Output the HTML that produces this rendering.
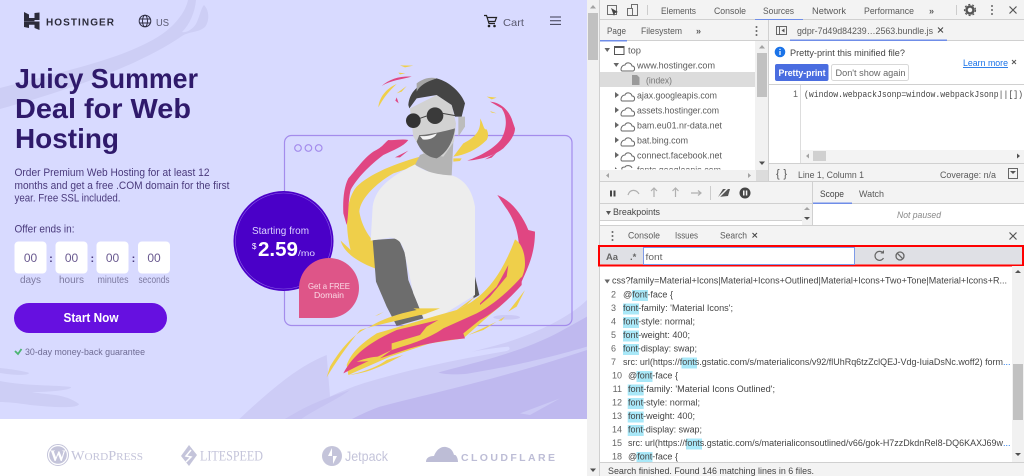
<!DOCTYPE html>
<html lang="en"><head><meta charset="utf-8"><title>Hostinger DevTools</title>
<style>
html,body{margin:0;padding:0;width:1024px;height:476px;overflow:hidden;background:#fff}
svg{display:block;font-family:"Liberation Sans",sans-serif}
#root{filter:blur(.3px)}
.d{font-size:9px;fill:#5a5a5a}
.c{font-size:9px;fill:#444}
.n{font-size:9px;fill:#666}
.p{font-size:11px;fill:#4a3a7c}
.l{font-size:10px;fill:#7d7aa0}
.o{font-size:12px;fill:#6a5a90}
.lg{fill:#c4c4da}
.hl{fill:#a9e8f8}
</style></head><body>
<svg id="root" xmlns="http://www.w3.org/2000/svg" width="1024" height="476" viewBox="0 0 1024 476">
<defs><clipPath id="pg"><rect width="587" height="419"/></clipPath></defs>
<rect width="1024" height="476" fill="#fff"/>
<rect width="587" height="419" fill="#d8daff"/>
<g clip-path="url(#pg)">
<path d="M0 88C60 72 130 58 165 32 178 22 186 10 188 0H196C195 12 190 24 182 32 186 33 192 30 196 24 200 16 201 8 204 5 209 10 210 20 205 27 198 33 190 31 182 36 140 65 70 90 0 109Z" fill="#cdcef5"/>
<path d="M0 368C12 369 28 372 29 373 28 376 12 375 0 373ZM0 381C25 386 55 385 71 387 72 390 50 392 32 392 45 395 65 393 79 404 78 409 50 407 30 405 18 403 6 402 0 402Z" fill="#cdcef5"/>
<g transform="translate(220 50) scale(.33333)">
<g transform="translate(330 750)">
<path d="M-275 360C-190 280 -100 200 -10 165L0 290C100 240 300 190 520 130 620 100 720 50 771 0V360Z" fill="#cdccf6"/>
<path d="M100 250C250 190 420 150 535 140 545 148 535 153 520 155 400 175 250 205 100 250Z" fill="#d8daff"/>
<path d="M325 218C400 195 560 165 690 95L771 50V140C600 190 500 205 430 218 400 225 350 225 325 218Z" fill="#bfb9ef"/>
<path d="M150 320C300 280 500 240 771 150V360H60C90 345 120 330 150 320Z" fill="#bfb9ef"/>
<path d="M-140 360C-60 310 0 290 60 270 20 300 -50 330 -90 360Z" fill="#c6c3f2"/>
<path d="M570 340L690 295 600 345Z" fill="#cbc9f5"/>
</g>
<ellipse cx="860" cy="802" rx="40" ry="7" fill="#cbc9f5"/>
</g>
<rect x="284.500" y="135.500" width="287.500" height="190" rx="7" fill="none" stroke="#a48cec" stroke-width="1.200"/>
<g fill="none" stroke="#a48cec" stroke-width="1.200"><circle cx="298" cy="148" r="3.300"/><circle cx="308.400" cy="148" r="3.300"/><circle cx="318.700" cy="148" r="3.300"/></g>
<g transform="translate(220 50) scale(.33333)">
<!-- top-right yellow tail -->
<path d="M780 205C792 225 790 240 800 238 806 250 805 262 800 270 770 300 735 315 700 320L730 280C760 265 785 245 780 205Z" fill="#efcf4a"/>
<path d="M700 325L725 325 720 333 700 335Z" fill="#efcf4a"/>
<!-- yellow C -->
<path d="M600 320C530 340 450 370 410 410 385 440 378 490 382 540 384 565 388 585 392 600L362 572C370 605 410 635 465 655L480 590C450 570 425 530 418 485 420 450 460 405 520 370L610 340Z" fill="#efcf4a"/>
<!-- pink C -->
<path d="M565 270C545 266 525 272 505 270 490 282 490 290 460 305 430 325 400 370 385 385 372 410 368 450 370 490L380 525C386 500 384 450 392 420 410 385 450 345 490 315 520 300 550 290 565 270Z" fill="#e04682"/>
<path d="M525 322L565 302 540 322Z" fill="#e04682"/>
<!-- top-right pink -->
<path d="M810 155C845 158 870 185 878 215L885 235C885 255 870 275 850 295 825 315 790 328 742 332 780 318 825 295 845 265 858 240 865 205 845 175Z" fill="#e04682"/>
<path d="M795 328L830 308 815 323Z" fill="#e04682"/>
<path d="M800 140L830 143 815 148ZM810 183L830 190 815 188Z" fill="#efcf4a"/>
<path d="M485 108C510 85 545 78 575 80 545 88 510 92 485 108ZM530 142L536 160 526 152Z" fill="#e04682"/>
<path d="M475 172C478 140 500 115 530 102 505 125 490 145 475 172ZM530 130L560 108 545 125ZM540 46L580 47 555 52ZM535 68L556 70 540 73Z" fill="#efcf4a"/>
<!-- person -->
<path d="M600 315L700 275 695 378 640 372 585 345Z" fill="#b4b4b4"/>
<path d="M458 570L535 565 555 610 565 690 610 805 530 828 500 770 468 695Z" fill="#6d6d6d"/>
<path d="M765 680L778 735 760 745Z" fill="#555"/>
<path d="M585 343C600 360 650 375 695 376 725 385 755 410 765 470L765 735 650 806 612 805 580 730 555 615C550 580 535 565 510 563L452 572 458 470C465 420 500 385 585 343Z" fill="#ededed"/>
<path d="M715 200L735 200 735 230 715 260Z" fill="#bcbcbc"/>
<path d="M570 175L650 135 695 165 708 220 702 275 670 320 610 310 580 260 575 220Z" fill="#d2d2d2"/>
<path d="M598 255C620 255 670 245 705 235 700 275 680 310 650 325 620 322 600 300 590 275Z" fill="#6e6e6e"/>
<path d="M600 258C615 260 635 256 650 250 648 262 625 272 608 268Z" fill="#f4f4f4"/>
<path d="M565 165C568 130 590 100 650 85 690 95 725 130 735 160L725 200 705 200 695 165 650 135 590 145 568 175Z" fill="#444"/>
<path d="M590 100C610 85 630 80 650 85 620 95 600 105 590 125Z" fill="#a5a5a5"/>
<circle cx="580" cy="212" r="22" fill="#333"/><circle cx="645" cy="197" r="25" fill="#3a3a3a"/>
<path d="M600 205L620 198M668 190L712 198" stroke="#444" stroke-width="3"/>
<!-- right pink -->
<path d="M832 435C870 450 905 490 925 540L945 545C945 610 925 650 905 695L895 650C905 560 885 510 855 470Z" fill="#e04682"/>
<!-- yellow wisp -->
<path d="M330 950C360 900 400 850 450 830 490 805 540 790 590 780L580 775 660 775C620 790 610 795 600 795 540 810 470 825 420 840 380 890 345 940 320 982Z" fill="#efcf4a"/>
<!-- big yellow -->
<path d="M380 945C395 905 425 880 470 850 540 830 620 805 710 780 765 755 830 715 885 568 905 580 915 610 915 640 915 680 890 715 840 770 790 810 760 840 730 865L630 880 510 920 385 975Z" fill="#efcf4a"/>
<path d="M710 780L765 740 740 765Z" fill="#efcf4a"/>
<!-- pink lower -->
<path d="M515 900C560 885 620 870 670 835L770 790C820 765 870 720 905 680V705C870 745 820 790 780 810L730 850 735 865C680 870 620 880 570 895L480 925Z" fill="#e04682"/>
<path d="M370 970C395 925 430 885 530 840L655 810 620 830 600 855 515 880 515 900 410 950Z" fill="#e04682"/>
<path d="M780 760L830 710 865 645 860 680 810 740 780 765Z" fill="#e04682"/>
<path d="M410 935C450 920 470 920 485 920 460 935 430 935 410 935ZM385 975C440 965 480 945 500 930L550 915C500 940 450 970 385 975Z" fill="#efcf4a"/>
<path d="M745 855L830 815 790 840ZM865 785L915 720 890 770ZM835 812L855 800 845 812ZM465 798L492 785 475 795Z" fill="#efcf4a"/>
</g>
<circle cx="283.500" cy="241" r="50" fill="#4a00c8"/>
<circle cx="283.500" cy="241" r="48" fill="none" stroke="#8a5ce6" stroke-width=".6"/>
<path d="M299 318V288A30 30 0 1 1 329 318Z" fill="#de5588"/>
<text x="252" y="234" font-size="10" fill="#dcd4ff" textLength="57" lengthAdjust="spacingAndGlyphs">Starting from</text>
<text x="252" y="249" font-size="8" fill="#fff">$</text>
<text x="258" y="256" font-size="20" font-weight="bold" fill="#fff" textLength="40" lengthAdjust="spacingAndGlyphs">2.59</text>
<text x="298" y="256" font-size="8.500" fill="#dcd4ff" textLength="17" lengthAdjust="spacingAndGlyphs">/mo</text>
<text x="329" y="289" font-size="8.500" fill="#fbdbe7" text-anchor="middle" textLength="42" lengthAdjust="spacingAndGlyphs">Get a FREE</text>
<text x="329" y="298" font-size="8.500" fill="#fbdbe7" text-anchor="middle" textLength="30" lengthAdjust="spacingAndGlyphs">Domain</text>
</g>
<!-- header -->
<path d="M24 12L29 14.500V18H34.500V21.200H24ZM34.500 13L39.500 12.500V20H34.500ZM24 22H29V28L24 27ZM24 21.500H39.500V30L34.500 28V24.800H24Z" fill="#2b2b3a"/>
<text x="46" y="25.500" font-size="10" font-weight="bold" fill="#2b2b3a" textLength="68" lengthAdjust="spacing">HOSTINGER</text>
<g fill="none" stroke="#2f2f45" stroke-width="1"><circle cx="145" cy="21" r="5.800"/><ellipse cx="145" cy="21" rx="2.500" ry="5.800"/><path d="M139.500 19H150.500M139.500 23H150.500"/></g>
<text x="156" y="26" font-size="10.500" fill="#5a5a70" textLength="13" lengthAdjust="spacingAndGlyphs">US</text>
<g fill="none" stroke="#222" stroke-width="1.200"><path d="M484 15.500H486.500L489 23.500H495M487 17.500H496.500L495 21.500H488"/></g><circle cx="489" cy="26" r="1.300" fill="#222"/><circle cx="494.500" cy="26" r="1.300" fill="#222"/>
<text x="503" y="26" font-size="10.500" fill="#5a5a70" textLength="21" lengthAdjust="spacingAndGlyphs">Cart</text>
<path d="M550 17H561M550 20.700H561M550 24.400H561" stroke="#3a3a50" stroke-width="1"/>
<!-- hero text -->
<g font-size="27.500" font-weight="bold" fill="#2f1a6b">
<text x="15" y="88" textLength="183" lengthAdjust="spacingAndGlyphs">Juicy Summer</text>
<text x="15" y="118" textLength="176" lengthAdjust="spacingAndGlyphs">Deal for Web</text>
<text x="15" y="148" textLength="104" lengthAdjust="spacingAndGlyphs">Hosting</text>
</g>
<text class="p" x="14.500" y="176" textLength="195" lengthAdjust="spacingAndGlyphs">Order Premium Web Hosting for at least 12</text>
<text class="p" x="14.500" y="189" textLength="215" lengthAdjust="spacingAndGlyphs">months and get a free .COM domain for the first</text>
<text class="p" x="14.500" y="201.500" textLength="106" lengthAdjust="spacingAndGlyphs">year. Free SSL included.</text>
<text class="p" x="14.500" y="232.500" textLength="60" lengthAdjust="spacingAndGlyphs">Offer ends in:</text>
<g fill="#fff"><rect x="14.500" y="241.500" width="32" height="32" rx="4"/><rect x="55.500" y="241.500" width="32" height="32" rx="4"/><rect x="96.500" y="241.500" width="32" height="32" rx="4"/><rect x="138" y="241.500" width="32" height="32" rx="4"/></g>
<g text-anchor="middle">
<text class="o" x="30.500" y="262">00</text><text class="o" x="71.500" y="262">00</text><text class="o" x="112.500" y="262">00</text><text class="o" x="154" y="262">00</text>
<text x="51" y="262" font-size="11" font-weight="bold" fill="#4a3a7c">:</text><text x="92.300" y="262" font-size="11" font-weight="bold" fill="#4a3a7c">:</text><text x="133.500" y="262" font-size="11" font-weight="bold" fill="#4a3a7c">:</text>
<text class="l" x="30.500" y="283">days</text><text class="l" x="71.500" y="283">hours</text><text class="l" x="113" y="283" textLength="31" lengthAdjust="spacingAndGlyphs">minutes</text><text class="l" x="154" y="283" textLength="31" lengthAdjust="spacingAndGlyphs">seconds</text>
</g>
<rect x="14" y="303" width="153" height="30" rx="15" fill="#6610e0"/>
<text x="63.500" y="322" font-size="12.500" font-weight="bold" fill="#fff" textLength="55" lengthAdjust="spacingAndGlyphs">Start Now</text>
<path d="M15 351L18 354 21.500 349" fill="none" stroke="#4cb572" stroke-width="1.800"/>
<text x="25" y="355" font-size="9.500" fill="#6f6c94" textLength="120" lengthAdjust="spacingAndGlyphs">30-day money-back guarantee</text>
<!-- logos -->
<circle cx="58" cy="455" r="10.500" fill="none" stroke="#c4c4da" stroke-width="1"/>
<circle cx="58" cy="455" r="8.800" fill="#c4c4da"/>
<text x="58" y="461" font-family="Liberation Serif" font-size="16" font-weight="bold" fill="#fff" text-anchor="middle">W</text>
<text class="lg" x="71" y="460" font-family="Liberation Serif" font-size="14" textLength="72" lengthAdjust="spacingAndGlyphs">W<tspan font-size="11">ORD</tspan>P<tspan font-size="11">RESS</tspan></text>
<path d="M189 445L197 455 189 466 181 456Z" class="lg"/><path d="M191 450L186 456 191 457 186 462" stroke="#fff" stroke-width="1.500" fill="none"/>
<text class="lg" x="200" y="460.500" font-family="Liberation Serif" font-size="15" textLength="63" lengthAdjust="spacingAndGlyphs">LITESPEED</text>
<circle cx="332" cy="456" r="10" class="lg"/><path d="M332 448V456H328ZM333 464V456H337Z" fill="#fff"/>
<text class="lg" x="345" y="461" font-size="14" textLength="43" lengthAdjust="spacingAndGlyphs">Jetpack</text>
<path d="M426 462C426 458 429 456 434 456 436 450 441 446 446 447 451 448 453 451 454 455 456 454 458 458 458 462Z" fill="#bdbdd6"/>
<text x="461" y="461" font-size="10.500" font-weight="bold" fill="#bdbdd6" textLength="94" lengthAdjust="spacing">CLOUDFLARE</text>
<!-- page scrollbar -->
<rect x="587" width="12" height="476" fill="#f1f1f1"/>
<rect x="588" y="13" width="10" height="47" fill="#c1c1c1"/>
<path d="M593 5L596 8.500H590Z" fill="#a3a3a3"/>
<path d="M593 472L596 468.500H590Z" fill="#505050"/>
<!-- devtools chrome -->
<rect x="599" width="425" height="20" fill="#f3f3f3"/>
<rect x="599" y="19" width="425" height="1" fill="#d0d0d0"/>
<rect x="599" width="1" height="476" fill="#d0d0d0"/>
<rect x="607.500" y="5.500" width="9" height="9" fill="none" stroke="#6e6e6e"/>
<path d="M611 8L618 12 615 13 614 16Z" fill="#444"/>
<rect x="631.500" y="4.500" width="6" height="11" fill="none" stroke="#6e6e6e"/><rect x="627.500" y="8.500" width="5" height="7" fill="#f3f3f3" stroke="#6e6e6e"/>
<rect x="647" y="5" width="1" height="10" fill="#ccc"/>
<text class="d" x="661" y="14" textLength="35" lengthAdjust="spacingAndGlyphs">Elements</text>
<text class="d" x="714" y="14" textLength="32" lengthAdjust="spacingAndGlyphs">Console</text>
<text class="d" x="763" y="14" textLength="31" lengthAdjust="spacingAndGlyphs">Sources</text>
<text class="d" x="812" y="14" textLength="34" lengthAdjust="spacingAndGlyphs">Network</text>
<text class="d" x="864" y="14" textLength="50" lengthAdjust="spacingAndGlyphs">Performance</text>
<text class="d" x="929" y="14" font-weight="bold">»</text>
<rect x="755" y="19" width="48" height="1.500" fill="#6f8de8"/>
<rect x="956" y="5" width="1" height="10" fill="#ccc"/>
<circle cx="970" cy="10" r="3.500" fill="none" stroke="#555" stroke-width="2.500"/>
<circle cx="970" cy="10" r="5.500" fill="none" stroke="#555" stroke-width="1.200" stroke-dasharray="2 2"/>
<g fill="#666"><circle cx="992" cy="6" r="1"/><circle cx="992" cy="10" r="1"/><circle cx="992" cy="14" r="1"/></g>
<path d="M1009.500 6.500L1016.500 13.500M1016.500 6.500L1009.500 13.500" stroke="#555" stroke-width="1.200"/>
<!-- left nav -->
<rect x="600" y="20" width="168" height="20" fill="#f3f3f3"/>
<rect x="600" y="40" width="168" height="1" fill="#d0d0d0"/>
<rect x="600" y="40" width="27" height="1.500" fill="#6f8de8"/>
<text class="d" x="607" y="34" textLength="19" lengthAdjust="spacingAndGlyphs">Page</text>
<text class="d" x="641" y="34" textLength="41" lengthAdjust="spacingAndGlyphs">Filesystem</text>
<text class="d" x="696" y="34" font-weight="bold">»</text>
<g fill="#666"><circle cx="756.500" cy="27" r="1"/><circle cx="756.500" cy="31" r="1"/><circle cx="756.500" cy="35" r="1"/></g>
<rect x="600" y="72" width="155" height="15" fill="#dcdcdc"/>
<rect x="755" y="41" width="13" height="129" fill="#f1f1f1"/>
<rect x="757" y="53" width="10" height="44" fill="#c1c1c1"/>
<path d="M762 45L765 48.500H759Z" fill="#a3a3a3"/><path d="M762 165L765 161.500H759Z" fill="#505050"/>
<rect x="600" y="170" width="168" height="11" fill="#f1f1f1"/><rect x="756" y="170" width="12" height="11" fill="#dcdcdc"/>
<path d="M606 175.500L609 173V178Z" fill="#a3a3a3"/><path d="M751 175.500L748 173V178Z" fill="#a3a3a3"/>
<g fill="#666">
<path d="M604.500 48L610 48 607.250 52Z"/><path d="M613.500 63L619 63 616.250 67Z"/>
<path d="M615 92V98L619 95Z"/><path d="M615 107V113L619 110Z"/><path d="M615 122V128L619 125Z"/><path d="M615 137V143L619 140Z"/><path d="M615 152V158L619 155Z"/><path d="M615 167V169L617 169Z"/>
</g>
<rect x="614.500" y="46.500" width="9.500" height="8" fill="none" stroke="#555"/><rect x="614.500" y="46.500" width="9.500" height="1.500" fill="#555"/>
<g fill="none" stroke="#666" stroke-width="1">
<path d="M622 71H633C635 71 635.500 66 632 66 631 62 626 62 625 65 621 65 620 71 622 71Z"/>
<path d="M622 101H633C635 101 635.500 96 632 96 631 92 626 92 625 95 621 95 620 101 622 101Z"/>
<path d="M622 116H633C635 116 635.500 111 632 111 631 107 626 107 625 110 621 110 620 116 622 116Z"/>
<path d="M622 131H633C635 131 635.500 126 632 126 631 122 626 122 625 125 621 125 620 131 622 131Z"/>
<path d="M622 146H633C635 146 635.500 141 632 141 631 137 626 137 625 140 621 140 620 146 622 146Z"/>
<path d="M622 161H633C635 161 635.500 156 632 156 631 152 626 152 625 155 621 155 620 161 622 161Z"/>
<path d="M622 169.500C621 167 624 167 625 167 626 165 631 165 632 168"/>
</g>
<path d="M632 75H637L639.500 77.500V85H632Z" fill="#9a9a9a"/>
<text class="d" x="628" y="53.500" textLength="13" lengthAdjust="spacingAndGlyphs">top</text>
<text class="d" x="637" y="68.500" textLength="78" lengthAdjust="spacingAndGlyphs">www.hostinger.com</text>
<text class="d" x="646" y="83.500" textLength="26" lengthAdjust="spacingAndGlyphs" style="fill:#777">(index)</text>
<text class="d" x="637" y="98.500" textLength="80" lengthAdjust="spacingAndGlyphs">ajax.googleapis.com</text>
<text class="d" x="637" y="113.500" textLength="82" lengthAdjust="spacingAndGlyphs">assets.hostinger.com</text>
<text class="d" x="637" y="128.500" textLength="85" lengthAdjust="spacingAndGlyphs">bam.eu01.nr-data.net</text>
<text class="d" x="637" y="143.500" textLength="51" lengthAdjust="spacingAndGlyphs">bat.bing.com</text>
<text class="d" x="637" y="158.500" textLength="85" lengthAdjust="spacingAndGlyphs">connect.facebook.net</text>
<svg x="600" y="160" width="155" height="9.500" viewBox="600 160 155 9.500"><text class="d" x="637" y="173" textLength="84" lengthAdjust="spacingAndGlyphs">fonts.googleapis.com</text></svg>
<!-- editor -->
<rect x="768" y="20" width="1" height="161" fill="#d0d0d0"/>
<rect x="769" y="20" width="255" height="20" fill="#f3f3f3"/>
<rect x="769" y="40" width="255" height="1" fill="#d0d0d0"/>
<rect x="790" y="39.500" width="157" height="1.500" fill="#6f8de8"/>
<rect x="776.500" y="26.500" width="10" height="8" fill="none" stroke="#666"/><path d="M779.500 26V35" stroke="#666"/><path d="M784.500 28.500V32.500L781.500 30.500Z" fill="#555"/>
<text class="d" x="797" y="34" textLength="136" lengthAdjust="spacingAndGlyphs">gdpr-7d49d84239…2563.bundle.js</text>
<path d="M938 27.500L943 32.500M943 27.500L938 32.500" stroke="#444"/>
<circle cx="780" cy="52" r="5.300" fill="#1a73e8"/><rect x="779.400" y="51" width="1.200" height="4" fill="#fff"/><rect x="779.400" y="48.800" width="1.200" height="1.200" fill="#fff"/>
<text class="c" x="790" y="56" textLength="115" lengthAdjust="spacingAndGlyphs">Pretty-print this minified file?</text>
<rect x="775" y="64" width="53.500" height="17" rx="2" fill="#4a6de0"/>
<text x="778.500" y="76" font-size="9" font-weight="bold" fill="#fff" textLength="47" lengthAdjust="spacingAndGlyphs">Pretty-print</text>
<rect x="831.500" y="64.500" width="77" height="16" rx="2" fill="#fff" stroke="#d8d8d8"/>
<text class="n" x="835.500" y="76" textLength="70" lengthAdjust="spacingAndGlyphs">Don't show again</text>
<text x="963" y="66" font-size="9" fill="#1a73e8" text-decoration="underline" textLength="45" lengthAdjust="spacingAndGlyphs">Learn more</text>
<path d="M1012 60L1016 64M1016 60L1012 64" stroke="#555"/>
<rect x="769" y="84" width="255" height="1" fill="#d0d0d0"/>
<rect x="800" y="85" width="1" height="78" fill="#ddd"/>
<text class="n" x="793" y="97">1</text>
<text x="804" y="97" font-family="Liberation Mono" font-size="8.900" fill="#444" textLength="219" lengthAdjust="spacingAndGlyphs">(window.webpackJsonp=window.webpackJsonp||[])</text>
<rect x="801" y="150" width="223" height="13" fill="#f3f3f3"/>
<rect x="813" y="151" width="13" height="10" fill="#d0d0d0"/>
<path d="M806 156L809 153.500V158.500Z" fill="#a3a3a3"/><path d="M1020 156L1017 153.500V158.500Z" fill="#505050"/>
<rect x="769" y="163" width="255" height="18" fill="#f3f3f3"/>
<rect x="769" y="163" width="255" height="1" fill="#d0d0d0"/>
<text x="776" y="177" font-size="11" fill="#555" textLength="11" lengthAdjust="spacing">{}</text>
<text class="d" x="798" y="178" textLength="66" lengthAdjust="spacingAndGlyphs">Line 1, Column 1</text>
<text class="d" x="940" y="178" textLength="56" lengthAdjust="spacingAndGlyphs">Coverage: n/a</text>
<rect x="1008.500" y="168.500" width="9" height="10" fill="none" stroke="#666"/><path d="M1010 171H1016L1013 174Z" fill="#555"/>
<!-- debugger -->
<rect x="600" y="181" width="424" height="44" fill="#f3f3f3"/>
<rect x="600" y="181" width="424" height="1" fill="#d0d0d0"/>
<rect x="610" y="190.500" width="2" height="6" fill="#444"/><rect x="613.500" y="190.500" width="2" height="6" fill="#444"/>
<g fill="none" stroke="#b0b0b0" stroke-width="1.200"><path d="M628 195C630 189 636 189 639 194"/><path d="M654 188V197M651 191L654 188 657 191"/><path d="M675.500 188V197M672.500 191L675.500 188 678.500 191"/><path d="M691 193H701M698 190.500L701 193 698 195.500"/></g>
<rect x="710" y="186" width="1" height="14" fill="#ccc"/>
<path d="M718 197L723 189H730L728 196Z" fill="#555"/><path d="M718 198L728 188" stroke="#f3f3f3" stroke-width="1.500"/>
<circle cx="745" cy="193" r="5.500" fill="#444"/><rect x="743" y="190.500" width="1.500" height="5" fill="#f3f3f3"/><rect x="745.800" y="190.500" width="1.500" height="5" fill="#f3f3f3"/>
<rect x="600" y="203" width="212" height="1" fill="#d0d0d0"/>
<path d="M606 211H611L608.500 215Z" fill="#555"/>
<text class="c" x="613" y="215" textLength="47" lengthAdjust="spacingAndGlyphs">Breakpoints</text>
<rect x="600" y="220" width="212" height="1" fill="#d0d0d0"/><rect x="600" y="221" width="202" height="4" fill="#fff"/>
<rect x="802" y="204" width="10" height="21" fill="#f1f1f1"/><path d="M807 207L810 210H804Z" fill="#a3a3a3"/><path d="M807 220L810 217H804Z" fill="#505050"/>
<rect x="812" y="181" width="1" height="44" fill="#d0d0d0"/>
<rect x="813" y="204" width="211" height="21" fill="#fff"/><rect x="813" y="203" width="211" height="1" fill="#d0d0d0"/>
<rect x="813" y="202.500" width="39" height="1.500" fill="#6f8de8"/>
<text class="c" x="820" y="197" textLength="24" lengthAdjust="spacingAndGlyphs">Scope</text>
<text class="d" x="859" y="197" textLength="25" lengthAdjust="spacingAndGlyphs">Watch</text>
<text x="897" y="218" font-size="9" font-style="italic" fill="#888" textLength="44" lengthAdjust="spacingAndGlyphs">Not paused</text>
<!-- drawer -->
<rect x="600" y="225" width="424" height="21" fill="#f3f3f3"/>
<rect x="600" y="225" width="424" height="1" fill="#d0d0d0"/>
<g fill="#666"><circle cx="612.500" cy="232" r="1"/><circle cx="612.500" cy="236" r="1"/><circle cx="612.500" cy="240" r="1"/></g>
<text class="d" x="628" y="238.500" textLength="32" lengthAdjust="spacingAndGlyphs">Console</text>
<text class="d" x="675" y="238.500" textLength="23" lengthAdjust="spacingAndGlyphs">Issues</text>
<text class="d" x="720" y="238.500" textLength="27" lengthAdjust="spacingAndGlyphs">Search</text>
<path d="M752.500 233L757 237.500M757 233L752.500 237.500" stroke="#444"/>
<path d="M1009.500 232.500L1016.500 239.500M1016.500 232.500L1009.500 239.500" stroke="#555" stroke-width="1.200"/>
<rect x="599" y="246" width="424" height="19.500" fill="#dfe0e5" stroke="#f00" stroke-width="2"/>
<text x="606" y="260" font-size="9.500" font-weight="bold" fill="#666" textLength="12" lengthAdjust="spacingAndGlyphs">Aa</text>
<text x="630" y="260" font-size="9.500" font-weight="bold" fill="#666">.*</text>
<rect x="643.500" y="247.500" width="211" height="17" fill="#fff" stroke="#7e9be8"/>
<text class="n" x="645.500" y="260" textLength="17" lengthAdjust="spacingAndGlyphs">font</text>
<path d="M883 253A4.500 4.500 0 1 0 883.500 258" fill="none" stroke="#666" stroke-width="1.200"/><path d="M880.500 253.500H884V250Z" fill="#666"/>
<circle cx="900" cy="256" r="4" fill="none" stroke="#666" stroke-width="1.300"/><path d="M897.200 253.200L902.800 258.800" stroke="#666" stroke-width="1.300"/>
<!-- results -->
<rect x="1012" y="266" width="12" height="197" fill="#f1f1f1"/>
<rect x="1013" y="364" width="10" height="56" fill="#c1c1c1"/>
<path d="M1018 270L1021 273H1015Z" fill="#555"/><path d="M1018 456L1021 453H1015Z" fill="#505050"/>
<path d="M604.500 279.500H610L607.250 283.500Z" fill="#666"/>
<text class="c" x="612" y="283.500" textLength="395" lengthAdjust="spacingAndGlyphs">css?family=Material+Icons|Material+Icons+Outlined|Material+Icons+Two+Tone|Material+Icons+R...</text>
<rect class="hl" x="632" y="290" width="16" height="11"/>
<rect class="hl" x="623" y="303.500" width="16" height="11"/>
<rect class="hl" x="623" y="317" width="16" height="11"/>
<rect class="hl" x="623" y="330.500" width="16" height="11"/>
<rect class="hl" x="623" y="344" width="16" height="11"/>
<rect class="hl" x="681.500" y="357.500" width="15.500" height="11"/>
<rect class="hl" x="636.500" y="371" width="16" height="11"/>
<rect class="hl" x="627.700" y="384.500" width="16" height="11"/>
<rect class="hl" x="627.700" y="398" width="16" height="11"/>
<rect class="hl" x="627.700" y="411.500" width="16" height="11"/>
<rect class="hl" x="627.700" y="425" width="16" height="11"/>
<rect class="hl" x="686" y="438.500" width="16" height="11"/>
<rect class="hl" x="636.500" y="452" width="16" height="11"/>
<g text-anchor="end">
<text class="n" x="616" y="297.500">2</text><text class="n" x="616" y="311">3</text><text class="n" x="616" y="324.500">4</text><text class="n" x="616" y="338">5</text><text class="n" x="616" y="351.500">6</text><text class="n" x="616" y="365">7</text>
<text class="n" x="622" y="378.500">10</text><text class="n" x="622" y="392">11</text><text class="n" x="622" y="405.500">12</text><text class="n" x="622" y="419">13</text><text class="n" x="622" y="432.500">14</text><text class="n" x="622" y="446">15</text><text class="n" x="622" y="459.500">18</text>
</g>
<text class="c" x="623" y="297.500" textLength="50" lengthAdjust="spacingAndGlyphs">@font-face {</text>
<text class="c" x="623" y="311" textLength="110" lengthAdjust="spacingAndGlyphs">font-family: 'Material Icons';</text>
<text class="c" x="623" y="324.500" textLength="72" lengthAdjust="spacingAndGlyphs">font-style: normal;</text>
<text class="c" x="623" y="338" textLength="67" lengthAdjust="spacingAndGlyphs">font-weight: 400;</text>
<text class="c" x="623" y="351.500" textLength="74" lengthAdjust="spacingAndGlyphs">font-display: swap;</text>
<text class="c" x="623" y="365" textLength="380" lengthAdjust="spacingAndGlyphs">src: url(https://fonts.gstatic.com/s/materialicons/v92/flUhRq6tzZclQEJ-Vdg-IuiaDsNc.woff2) form</text>
<text x="1003" y="365" font-size="9" fill="#1a73e8">...</text>
<text class="c" x="628" y="378.500" textLength="50" lengthAdjust="spacingAndGlyphs">@font-face {</text>
<text class="c" x="628" y="392" textLength="147" lengthAdjust="spacingAndGlyphs">font-family: 'Material Icons Outlined';</text>
<text class="c" x="628" y="405.500" textLength="72" lengthAdjust="spacingAndGlyphs">font-style: normal;</text>
<text class="c" x="628" y="419" textLength="67" lengthAdjust="spacingAndGlyphs">font-weight: 400;</text>
<text class="c" x="628" y="432.500" textLength="74" lengthAdjust="spacingAndGlyphs">font-display: swap;</text>
<text class="c" x="628" y="446" textLength="375" lengthAdjust="spacingAndGlyphs">src: url(https://fonts.gstatic.com/s/materialiconsoutlined/v66/gok-H7zzDkdnRel8-DQ6KAXJ69w</text>
<text x="1003" y="446" font-size="9" fill="#1a73e8">...</text>
<text class="c" x="628" y="459.500" textLength="50" lengthAdjust="spacingAndGlyphs">@font-face {</text>
<rect x="600" y="462" width="424" height="14" fill="#f3f3f3"/>
<rect x="600" y="462" width="424" height="1" fill="#d0d0d0"/>
<text class="c" x="608" y="474" textLength="206" lengthAdjust="spacingAndGlyphs">Search finished.  Found 146 matching lines in 6 files.</text>
</svg>
</body></html>
